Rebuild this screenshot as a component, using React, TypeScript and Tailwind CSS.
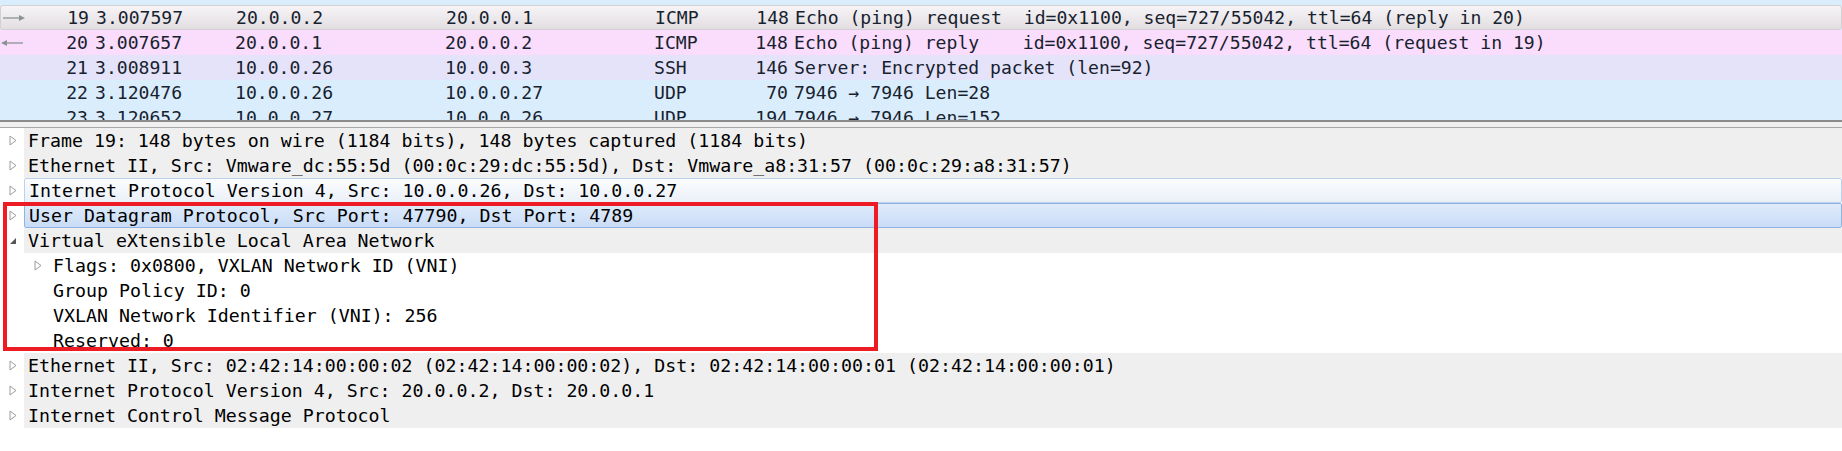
import React from "react";

type Packet = {
  no: string;
  time: string;
  src: string;
  dst: string;
  proto: string;
  len: string;
  info: string;
  bg: string;
  arrow?: "out" | "in";
};

const packets: Packet[] = [
  {
    no: "19",
    time: "3.007597",
    src: "20.0.0.2",
    dst: "20.0.0.1",
    proto: "ICMP",
    len: "148",
    info: "Echo (ping) request  id=0x1100, seq=727/55042, ttl=64 (reply in 20)",
    bg: "bg-gradient-to-b from-[#f7f4f7] to-[#e2dee1] border border-[#d3cfd3] rounded-[3px]",
    arrow: "out",
  },
  {
    no: "20",
    time: "3.007657",
    src: "20.0.0.1",
    dst: "20.0.0.2",
    proto: "ICMP",
    len: "148",
    info: "Echo (ping) reply    id=0x1100, seq=727/55042, ttl=64 (request in 19)",
    bg: "bg-[#fadcfc]",
    arrow: "in",
  },
  {
    no: "21",
    time: "3.008911",
    src: "10.0.0.26",
    dst: "10.0.0.3",
    proto: "SSH",
    len: "146",
    info: "Server: Encrypted packet (len=92)",
    bg: "bg-[#e5e3fa]",
  },
  {
    no: "22",
    time: "3.120476",
    src: "10.0.0.26",
    dst: "10.0.0.27",
    proto: "UDP",
    len: "70",
    info: "7946 → 7946 Len=28",
    bg: "bg-[#daedfd]",
  },
  {
    no: "23",
    time: "3.120652",
    src: "10.0.0.27",
    dst: "10.0.0.26",
    proto: "UDP",
    len: "194",
    info: "7946 → 7946 Len=152",
    bg: "bg-[#daedfd]",
  },
];

function Arrow({ dir }: { dir: "out" | "in" }) {
  return (
    <svg width="26" height="10" viewBox="0 0 26 10">
      {dir === "out" ? (
        <>
          <line x1="2" y1="5" x2="20" y2="5" stroke="#8b9393" strokeWidth="1.3" />
          <path d="M18 2 L24 5 L18 8 Z" fill="#8b9393" />
        </>
      ) : (
        <>
          <line x1="6" y1="5" x2="23" y2="5" stroke="#8b9393" strokeWidth="1.3" />
          <path d="M7 2 L1 5 L7 8 Z" fill="#8b9393" />
        </>
      )}
    </svg>
  );
}

function Expander({ open }: { open?: boolean }) {
  if (open) {
    return (
      <svg width="8" height="8" viewBox="0 0 8 8">
        <path d="M7 1 L7 7 L1 7 Z" fill="#555" />
      </svg>
    );
  }
  return (
    <svg width="8" height="11" viewBox="0 0 8 11">
      <path d="M1 1 L7 5.5 L1 10 Z" fill="none" stroke="#9c9c9c" strokeWidth="1" />
    </svg>
  );
}

function PacketRow({ p }: { p: Packet }) {
  return (
    <div className={`flex h-[25px] shrink-0 items-center whitespace-pre ${p.bg}`}>
      <div className="flex w-[26px] items-center">{p.arrow && <Arrow dir={p.arrow} />}</div>
      <div className="w-[62px] text-right">{p.no}</div>
      <div className="ml-[7px] w-[140px]">{p.time}</div>
      <div className="w-[210px]">{p.src}</div>
      <div className="w-[209px]">{p.dst}</div>
      <div className="w-[101px]">{p.proto}</div>
      <div className="w-[33px] text-right">{p.len}</div>
      <div className="ml-[6px]">{p.info}</div>
    </div>
  );
}

type Node = {
  text: string;
  level: 0 | 1;
  expander?: "closed" | "open";
  look?: "hover" | "selected";
};

const tree: Node[] = [
  { text: "Frame 19: 148 bytes on wire (1184 bits), 148 bytes captured (1184 bits)", level: 0, expander: "closed" },
  {
    text: "Ethernet II, Src: Vmware_dc:55:5d (00:0c:29:dc:55:5d), Dst: Vmware_a8:31:57 (00:0c:29:a8:31:57)",
    level: 0,
    expander: "closed",
  },
  { text: "Internet Protocol Version 4, Src: 10.0.0.26, Dst: 10.0.0.27", level: 0, expander: "closed", look: "hover" },
  { text: "User Datagram Protocol, Src Port: 47790, Dst Port: 4789", level: 0, expander: "closed", look: "selected" },
  { text: "Virtual eXtensible Local Area Network", level: 0, expander: "open" },
  { text: "Flags: 0x0800, VXLAN Network ID (VNI)", level: 1, expander: "closed" },
  { text: "Group Policy ID: 0", level: 1 },
  { text: "VXLAN Network Identifier (VNI): 256", level: 1 },
  { text: "Reserved: 0", level: 1 },
  {
    text: "Ethernet II, Src: 02:42:14:00:00:02 (02:42:14:00:00:02), Dst: 02:42:14:00:00:01 (02:42:14:00:00:01)",
    level: 0,
    expander: "closed",
  },
  { text: "Internet Protocol Version 4, Src: 20.0.0.2, Dst: 20.0.0.1", level: 0, expander: "closed" },
  { text: "Internet Control Message Protocol", level: 0, expander: "closed" },
];

function TreeRow({ n }: { n: Node }) {
  if (n.level === 1) {
    return (
      <div className="flex h-[25px] shrink-0 items-center bg-white whitespace-pre">
        <div className="ml-[34px] flex w-[19px] items-center">
          {n.expander && <Expander />}
        </div>
        <div>{n.text}</div>
      </div>
    );
  }
  const look =
    n.look === "selected"
      ? "bg-gradient-to-b from-[#dfebfb] to-[#c9dcf6] border border-[#90b4e2] rounded-[2px]"
      : n.look === "hover"
        ? "bg-gradient-to-b from-[#fbfcfe] to-[#ebf1f9] border border-[#bcd2ec] rounded-[2px]"
        : "bg-[#efefef]";
  return (
    <div className="flex h-[25px] shrink-0 items-center bg-white whitespace-pre">
      <div className="flex w-[24px] items-center pl-[9px]">
        <Expander open={n.expander === "open"} />
      </div>
      <div className={`flex h-full flex-1 items-center pl-[4px] ${look}`}>{n.text}</div>
    </div>
  );
}

export default function App() {
  return (
    <div
      className="relative h-[451px] w-[1842px] overflow-hidden bg-white"
      style={{ fontFamily: '"DejaVu Sans Mono", "Liberation Mono", monospace' }}
    >
      <div className="flex h-[120px] flex-col overflow-hidden bg-[#daedfd] text-[18.1px] text-[#17222e]">
        <div className="h-[5px] shrink-0" />
        {packets.map((p) => (
          <PacketRow key={p.no} p={p} />
        ))}
      </div>
      <div className="h-[2px] bg-[#8c8c8c]" />
      <div className="h-[5px] bg-[#f0f0f0]" />
      <div className="h-px bg-[#a8a8a8]" />
      <div className="flex flex-col text-[18.25px] text-black">
        {tree.map((n, i) => (
          <TreeRow key={i} n={n} />
        ))}
      </div>
      <div className="pointer-events-none absolute left-[3px] top-[202px] h-[149px] w-[875px] border-4 border-[#ed1c24]" />
    </div>
  );
}
